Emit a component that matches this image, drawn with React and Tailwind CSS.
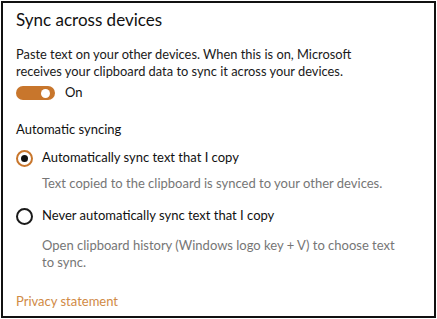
import React from 'react';

const font = { fontFamily: 'Lato, "Noto Sans", Arial, sans-serif' };

const Radio = ({ checked, label }) => (
    <div className="flex items-center h-[20px]">
        {checked ? (
            <span className="w-[17px] h-[17px] rounded-full border-2 border-[#c8762c] flex items-center justify-center">
                <span className="w-[7px] h-[7px] rounded-full bg-[#111]" />
            </span>
        ) : (
            <span className="w-[17px] h-[17px] rounded-full border-2 border-[#1a1a1a]" />
        )}
        <span className="ml-[9px] text-[13px] text-[#111]">{label}</span>
    </div>
);

const App = () => {
    return (
        <div className="w-[437px] h-[319px] bg-white p-[1px]" style={font}>
            <div className="w-[435px] h-[317px] border-2 border-[#111] pl-[13px] pt-[5px]">
                <h1 className="text-[17px] leading-[24px] text-[#111]">Sync across devices</h1>

                <p className="mt-[14px] text-[12.85px] leading-[17px] text-[#1a1a1a]">
                    Paste text on your other devices. When this is on, Microsoft<br />
                    receives your clipboard data to sync it across your devices.
                </p>

                <div className="mt-[3px] flex items-center h-[20px]">
                    <div className="w-[39px] h-[14px] rounded-full bg-[#c8762c] flex items-center">
                        <span className="ml-auto mr-[5px] w-[9px] h-[9px] rounded-full bg-white" />
                    </div>
                    <span className="ml-[10px] text-[13px] text-[#111]">On</span>
                </div>

                <div className="mt-[18px] text-[13px] leading-[17px] text-[#111]">Automatic syncing</div>

                <div className="mt-[10px]">
                    <Radio checked label="Automatically sync text that I copy" />
                </div>
                <p className="mt-[7px] pl-[26px] text-[13px] leading-[17px] text-[#767676]">
                    Text copied to the clipboard is synced to your other devices.
                </p>

                <div className="mt-[14px]">
                    <Radio label="Never automatically sync text that I copy" />
                </div>
                <p className="mt-[11px] pl-[26px] text-[13px] leading-[17px] text-[#767676]">
                    Open clipboard history (Windows logo key + V) to choose text<br />
                    to sync.
                </p>

                <a href="#" className="block mt-[22px] text-[13px] leading-[17px] text-[#d08a45]">
                    Privacy statement
                </a>
            </div>
        </div>
    );
};

export default App;
